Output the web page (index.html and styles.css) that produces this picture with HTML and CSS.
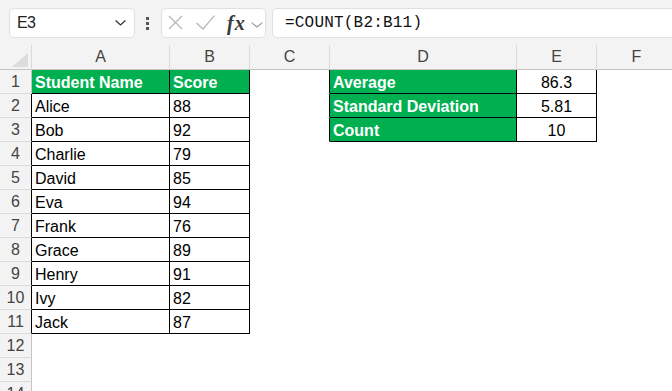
FILE: index.html
```html
<!DOCTYPE html>
<html lang="en">
<head>
    <meta charset="UTF-8">
    <meta name="viewport" content="width=device-width, initial-scale=1.0">
    <title>Student Scores</title>
    <link rel="stylesheet" href="styles.css">
</head>
<body>
    <!-- Formula bar -->
    <div class="toolbar">
        <div class="namebox">
            <span class="cellref">E3</span>
            <svg class="chev" width="11" height="6" viewBox="0 0 11 6"><path d="M0.6 0.6L5.5 5L10.4 0.6" fill="none" stroke="#333" stroke-width="1.3"/></svg>
        </div>
        <div class="grip"><span></span><span></span><span></span></div>
        <div class="fxbox">
            <svg class="cancel" width="15" height="15" viewBox="0 0 15 15"><path d="M1 1L14 14M14 1L1 14" fill="none" stroke="#b8b8b8" stroke-width="1.3"/></svg>
            <svg class="enter" width="19" height="15" viewBox="0 0 19 15"><path d="M0.6 8L7 14L18.4 0.6" fill="none" stroke="#b8b8b8" stroke-width="1.3"/></svg>
            <span class="fx">fx</span>
            <svg class="chev-sm" width="12" height="6" viewBox="0 0 12 6"><path d="M0.6 0.6L6 5L11.4 0.6" fill="none" stroke="#9a9a9a" stroke-width="1.1"/></svg>
        </div>
        <div class="formula">=COUNT(B2:B11)</div>
    </div>

    <!-- Worksheet -->
    <div class="sheet">
        <div class="corner"><span></span></div>
        <div class="ch">A</div>
        <div class="ch">B</div>
        <div class="ch">C</div>
        <div class="ch">D</div>
        <div class="ch">E</div>
        <div class="ch">F</div>

        <div class="rh">1</div>
        <div class="c t g">Student Name</div>
        <div class="c t g">Score</div>
        <div class="c side"></div>
        <div class="c t g">Average</div>
        <div class="c t num">86.3</div>
        <div class="c"></div>

        <div class="rh edge">2</div>
        <div class="c t">Alice</div>
        <div class="c t">88</div>
        <div class="c side"></div>
        <div class="c t g">Standard Deviation</div>
        <div class="c t num">5.81</div>
        <div class="c"></div>

        <div class="rh edge">3</div>
        <div class="c t">Bob</div>
        <div class="c t">92</div>
        <div class="c side"></div>
        <div class="c t g">Count</div>
        <div class="c t num">10</div>
        <div class="c"></div>

        <div class="rh edge">4</div>
        <div class="c t">Charlie</div>
        <div class="c t">79</div>
        <div class="c"></div><div class="c"></div><div class="c"></div><div class="c"></div>

        <div class="rh edge">5</div>
        <div class="c t">David</div>
        <div class="c t">85</div>
        <div class="c"></div><div class="c"></div><div class="c"></div><div class="c"></div>

        <div class="rh edge">6</div>
        <div class="c t">Eva</div>
        <div class="c t">94</div>
        <div class="c"></div><div class="c"></div><div class="c"></div><div class="c"></div>

        <div class="rh edge">7</div>
        <div class="c t">Frank</div>
        <div class="c t">76</div>
        <div class="c"></div><div class="c"></div><div class="c"></div><div class="c"></div>

        <div class="rh edge">8</div>
        <div class="c t">Grace</div>
        <div class="c t">89</div>
        <div class="c"></div><div class="c"></div><div class="c"></div><div class="c"></div>

        <div class="rh edge">9</div>
        <div class="c t">Henry</div>
        <div class="c t">91</div>
        <div class="c"></div><div class="c"></div><div class="c"></div><div class="c"></div>

        <div class="rh edge">10</div>
        <div class="c t">Ivy</div>
        <div class="c t">82</div>
        <div class="c"></div><div class="c"></div><div class="c"></div><div class="c"></div>

        <div class="rh edge">11</div>
        <div class="c t">Jack</div>
        <div class="c t">87</div>
        <div class="c"></div><div class="c"></div><div class="c"></div><div class="c"></div>

        <div class="rh">12</div>
        <div class="c"></div><div class="c"></div><div class="c"></div><div class="c"></div><div class="c"></div><div class="c"></div>

        <div class="rh">13</div>
        <div class="c"></div><div class="c"></div><div class="c"></div><div class="c"></div><div class="c"></div><div class="c"></div>

        <div class="rh">14</div>
        <div class="c"></div><div class="c"></div><div class="c"></div><div class="c"></div><div class="c"></div><div class="c"></div>
    </div>
</body>
</html>
```

FILE: styles.css
```css
/* Page */
body {
    margin: 0;
    padding: 0;
    overflow: hidden;
    background-color: white;
    font-family: "Liberation Sans", Arial, sans-serif;
    color: #000;
}

/* Formula bar strip */
.toolbar {
    display: flex;
    align-items: center;
    height: 45px;
    padding-left: 9px;
    background-color: #f3f3f3;
}

/* Shared look of the three boxes */
.namebox, .fxbox, .formula {
    box-sizing: border-box;
    height: 30px;
    background-color: white;
    border: 1px solid #e0e0e0;
    border-radius: 5px;
    flex-shrink: 0;
}

/* Name box */
.namebox {
    width: 126px;
    display: flex;
    align-items: center;
    justify-content: space-between;
    padding: 1px 8px 0 7px;
}

.cellref {
    font-size: 16px;
    letter-spacing: -0.6px;
    color: #222;
}

/* Vertical grip dots */
.grip {
    display: flex;
    flex-direction: column;
    gap: 2px;
    margin-left: 11px;
    margin-top: 2px;
}

.grip span {
    width: 3px;
    height: 3px;
    background-color: #555;
}

/* Cancel / enter / fx box */
.fxbox {
    width: 105px;
    margin-left: 12px;
    display: flex;
    align-items: center;
    padding-left: 6px;
}

.enter {
    margin-left: 13px;
}

.fx {
    margin-left: 12px;
    font-family: "Liberation Serif", "Times New Roman", serif;
    font-style: italic;
    font-weight: bold;
    font-size: 20px;
    letter-spacing: 1px;
    color: #3a3a3a;
    line-height: 20px;
}

.chev-sm {
    margin-left: 5px;
    margin-top: 4px;
}

/* Formula text */
.formula {
    width: 420px;
    margin-left: 6px;
    padding-left: 12px;
    font-family: "Liberation Mono", "Courier New", monospace;
    font-size: 16px;
    letter-spacing: 0.2px;
    line-height: 28px;
    color: #111;
}

/* Worksheet grid */
.sheet {
    display: grid;
    grid-template-columns: 32px 138px 80px 80px 187px 80px 80px;
    grid-template-rows: 25px;
    grid-auto-rows: 24px;
    font-size: 16px;
}

.sheet > div {
    box-sizing: border-box;
    border-right: 1px solid transparent;
    border-bottom: 1px solid transparent;
    white-space: nowrap;
    overflow: hidden;
}

/* Select-all corner */
.sheet > .corner {
    display: flex;
    justify-content: flex-end;
    align-items: flex-end;
    padding: 0 3px 2px 0;
    background-color: #f3f3f3;
    border-right-color: #dadada;
    border-bottom-color: #c4c4c4;
}

.corner span {
    width: 16px;
    height: 14px;
    background-color: #dcdcdc;
    clip-path: polygon(100% 0, 100% 100%, 0 100%);
}

/* Column headers */
.sheet > .ch {
    background-color: #f3f3f3;
    border-right-color: #dadada;
    border-bottom-color: #c4c4c4;
    text-align: center;
    line-height: 24px;
    color: #444;
}

/* Row headers */
.sheet > .rh {
    background-color: #f3f3f3;
    border-right-color: #c4c4c4;
    border-bottom-color: #dadada;
    text-align: center;
    line-height: 24px;
    color: #444;
}

.sheet > .rh.edge {
    border-right-color: #000;
}

/* Cells */
.c {
    padding: 2px 3px 0 3px;
    line-height: 21px;
}

.sheet > .t {
    border-right-color: #000;
    border-bottom-color: #000;
}

.sheet > .side {
    border-right-color: #000;
}

.g {
    background-color: #00b050;
    color: white;
    font-weight: bold;
}

.num {
    text-align: center;
}
```
